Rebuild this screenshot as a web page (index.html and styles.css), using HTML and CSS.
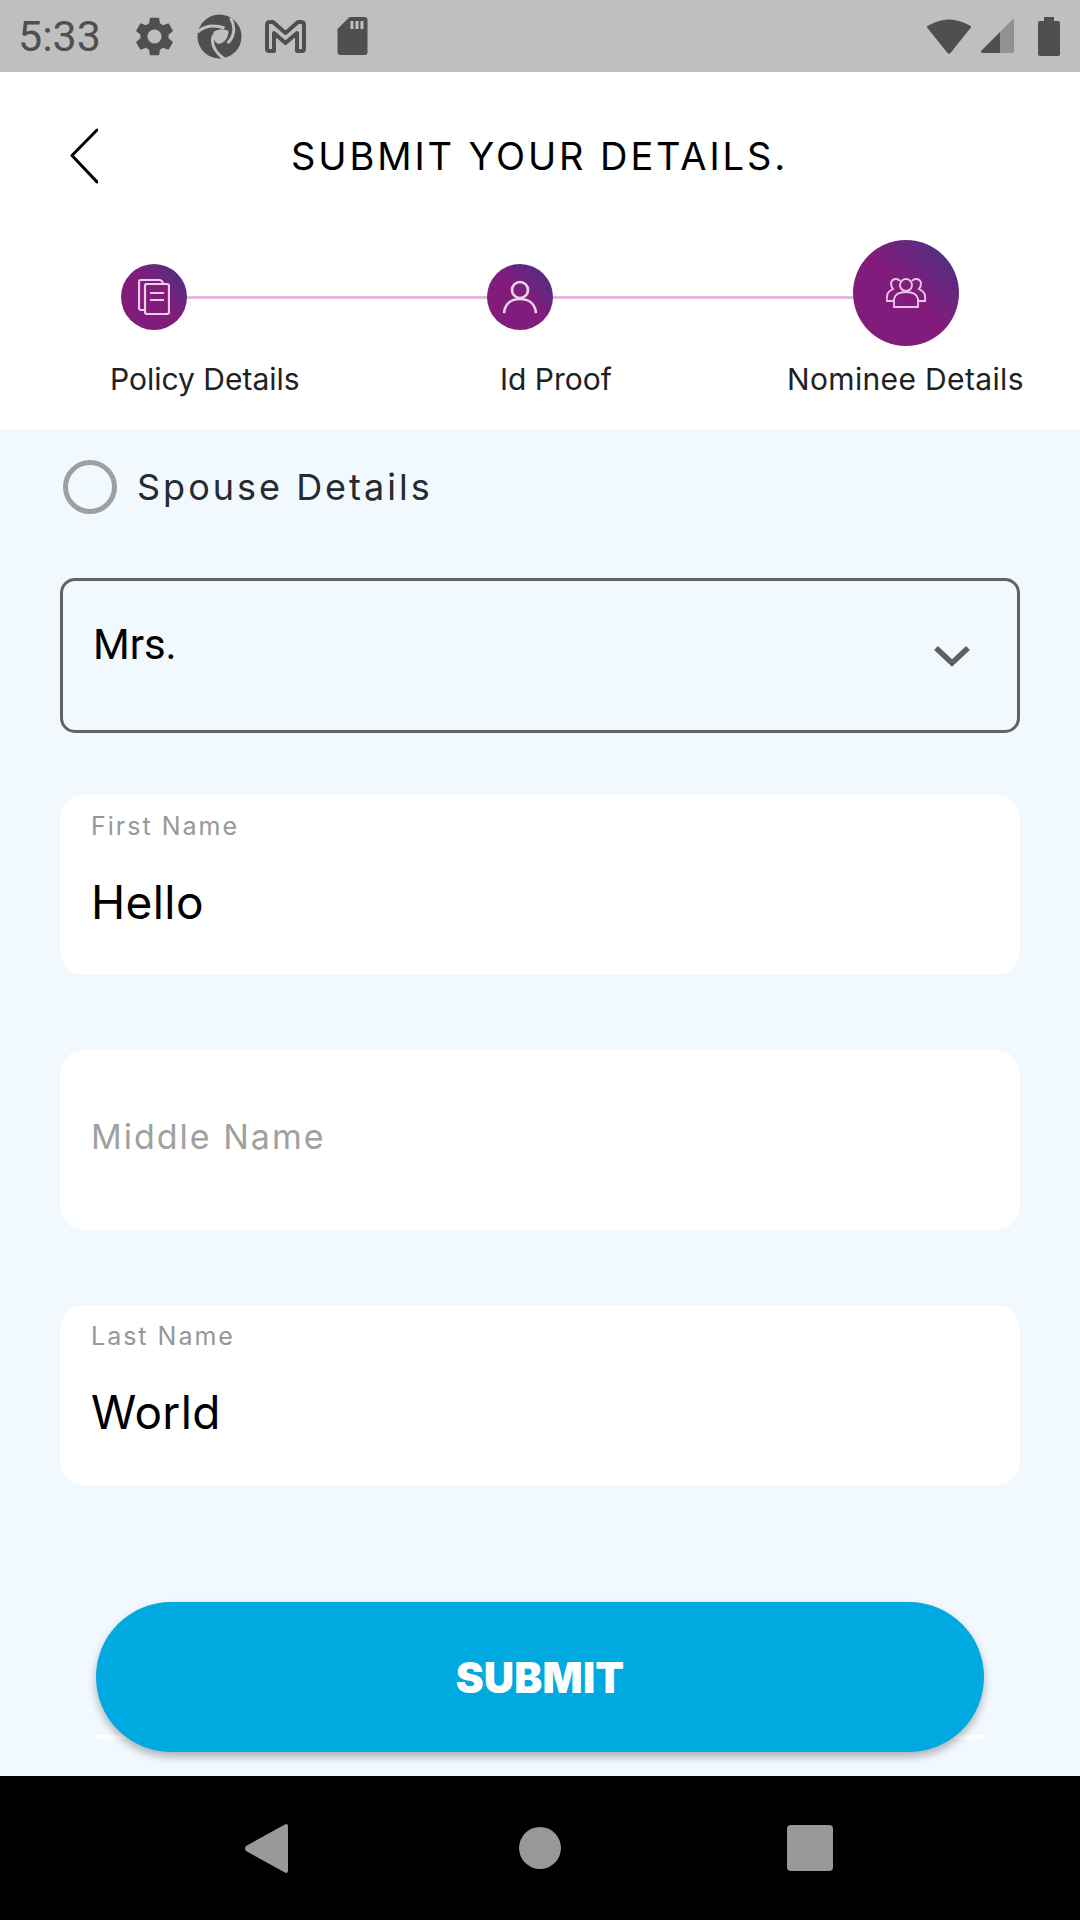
FILE: index.html
```html
<!DOCTYPE html>
<html lang="en">
<head>
<meta charset="utf-8">
<title>Submit your details</title>
<link rel="stylesheet" href="styles.css">
</head>
<body>
<div class="screen">
  <div class="status">
    <span class="time">5:33</span>
    <svg class="ic-gear" viewBox="0 0 24 24"><path fill="#4f4f4f" d="M19.14 12.94c.04-.3.06-.61.06-.94s-.02-.64-.07-.94l2.03-1.58a.5.5 0 0 0 .12-.61l-1.92-3.32a.5.5 0 0 0-.59-.22l-2.39.96a7 7 0 0 0-1.62-.94l-.36-2.54a.48.48 0 0 0-.48-.41h-3.84a.48.48 0 0 0-.47.41l-.36 2.54c-.59.24-1.13.57-1.62.94l-2.39-.96a.49.49 0 0 0-.59.22L2.74 8.87a.48.48 0 0 0 .12.61l2.03 1.58c-.05.3-.09.63-.09.94s.02.64.07.94l-2.03 1.58a.5.5 0 0 0-.12.61l1.92 3.32c.12.22.37.29.59.22l2.39-.96c.5.38 1.03.7 1.62.94l.36 2.54c.05.24.24.41.48.41h3.84c.24 0 .44-.17.47-.41l.36-2.54c.59-.24 1.13-.56 1.62-.94l2.39.96c.22.08.47 0 .59-.22l1.92-3.32a.48.48 0 0 0-.12-.61l-2.01-1.58zM12 15.6A3.6 3.6 0 1 1 12 8.4a3.6 3.6 0 0 1 0 7.2z"/></svg>
    <svg class="ic-logo" viewBox="0 0 44 45"><circle cx="22" cy="22.5" r="22" fill="#4f4f4f"/><path fill="none" stroke="#bfbfbf" stroke-width="3" d="M0 18 C8 11 18 11 27 14 M33 4 C39 14 36 24 30 29 M16 21 C13 30 17 38 27 45"/><path fill="#bfbfbf" d="M16 18 C22 14 27 15 31 17 C31 24 27 29 21 30 C17 28 15 24 16 18z"/></svg>
    <svg class="ic-gmail" viewBox="0 0 41 33"><path fill="none" stroke="#4f4f4f" stroke-width="4" stroke-linejoin="round" d="M2 5 Q2 2 5 2 H8 L20.5 13 L33 2 H36 Q39 2 39 5 V29 Q39 31 37 31 H32 V13 L20.5 23 L9 13 V31 H4 Q2 31 2 29z"/></svg>
    <svg class="ic-sd" viewBox="0 0 30 38"><path fill="#4f4f4f" d="M12 0 H27 Q30 0 30 3 V35 Q30 38 27 38 H3 Q0 38 0 35 V12z"/><path fill="#bfbfbf" d="M13 4h3v8h-3zM18 4h3v8h-3zM23 4h3v8h-3z"/></svg>
    <span class="status-gap"></span>
    <svg class="ic-wifi" viewBox="0 0 45 36"><path fill="#4f4f4f" d="M1 8 Q22.500 -5 44 8 Q45 9 44 10 L24 35 Q22.500 36.500 21 35 L1 10 Q0 9 1 8z"/></svg>
    <svg class="ic-signal" viewBox="0 0 33 34"><path fill="#919191" d="M32 0 Q33 0 33 1 V33 Q33 34 32 34 H19 V13z"/><path fill="#4f4f4f" d="M19 13 V34 H1 Q-1 33 1 31z"/></svg>
    <svg class="ic-battery" viewBox="0 0 22 39"><path fill="#4f4f4f" d="M6 0 H16 V4 H20 Q22 4 22 6 V37 Q22 39 20 39 H2 Q0 39 0 37 V6 Q0 4 2 4 H6z"/></svg>
  </div>

  <header class="head">
    <div class="titlebar">
      <svg class="back" viewBox="0 0 28 56"><path fill="none" stroke="#000" stroke-width="3" stroke-linecap="round" stroke-linejoin="round" d="M27 2 L2 27.500 L27 54"/></svg>
      <h1 class="title">SUBMIT YOUR DETAILS.</h1>
    </div>
    <div class="track">
      <span class="dot">
        <svg class="ic-doc" viewBox="0 0 32 36"><g fill="none" stroke="#e9cfe6" stroke-width="2.200"><path d="M6 31 H3 Q1 31 1 29 V3 Q1 1 3 1 H21 Q24 1 25 4"/><path fill="#821c7c" d="M8 5 H29 Q31 5 31 7 V33 Q31 35 29 35 H9 Q7 35 7 33 V6z"/><path d="M12 14 H26 M12 21 H26"/></g></svg>
      </span>
      <span class="line"></span>
      <span class="dot">
        <svg class="ic-user" viewBox="0 0 34 34"><g fill="none" stroke="#ecd5ea" stroke-width="2.600"><circle cx="17" cy="10" r="8"/><path d="M1 33 C2 23 9 19 17 19 C25 19 32 23 33 33"/></g></svg>
      </span>
      <span class="line"></span>
      <span class="dot dot-big">
        <svg class="ic-group" viewBox="0 0 40 30"><g fill="none" stroke="#e6c6e3" stroke-width="1.900"><path d="M14 3 C12 0 6 0 5 5 C5 8 6 10 7 11 C3 13 0 15 0.900 23 H9"/><path d="M26 3 C28 0 34 0 35 5 C35 8 34 10 33 11 C37 13 40 15 39.100 23 H31"/><circle cx="20" cy="7" r="6"/><path d="M8 29 H32 V21 C31 16 26 14 20 14 C14 14 9 16 8 21z"/></g></svg>
      </span>
    </div>
    <div class="labels">
      <span class="label l1">Policy Details</span>
      <span class="label l2">Id Proof</span>
      <span class="label l3">Nominee Details</span>
    </div>
  </header>

  <main class="form">
    <label class="radio"><span class="ring"></span><span class="radio-text">Spouse Details</span></label>
    <div class="select">
      <span class="select-val">Mrs.</span>
      <svg class="chev" viewBox="0 0 36 22"><path fill="none" stroke="#5f5f5f" stroke-width="5.500" d="M2 3 L18 18 L34 3"/></svg>
    </div>
    <div class="field"><span class="f-label">First Name</span><span class="f-val">Hello</span></div>
    <div class="field field-empty"><span class="f-ph">Middle Name</span></div>
    <div class="field"><span class="f-label">Last Name</span><span class="f-val">World</span></div>
    <div class="btn-wrap"><button class="btn">SUBMIT</button></div>
  </main>

  <nav class="nav">
    <svg class="n-back" viewBox="0 0 43 49"><path fill="#999" d="M41 0 Q43 0 43 2 V47 Q43 49 41 49 L39 48 L1 27 Q-1 24.500 1 22 L39 1z"/></svg>
    <span class="n-home"></span>
    <span class="n-square"></span>
  </nav>
</div>
</body>
</html>
```
FILE: styles.css
```css
* { box-sizing: border-box; }
html, body { margin: 0; padding: 0; }
body { font-family: "Inter", "Liberation Sans", sans-serif; }
.screen { width: 1080px; height: 1920px; display: flex; flex-direction: column; background: #f1f8fe; overflow: hidden; }

.status { height: 72px; flex: none; background: #bfbfbf; display: flex; align-items: center; padding: 0 20px 0 18px; }
.time { font-family: "Roboto", sans-serif; font-size: 43px; color: #4f4f4f; width: 113px; flex: none; }
.status svg { display: block; flex: none; }
.ic-gear { width: 47px; height: 47px; margin-right: 19px; }
.ic-logo { width: 45px; height: 45px; margin-right: 22px; }
.ic-gmail { width: 43px; height: 33px; margin-right: 30px; }
.ic-sd { width: 31px; height: 38px; }
.status-gap { flex: 1; }
.ic-wifi { width: 46px; height: 36px; margin-right: 8px; }
.ic-signal { width: 35px; height: 34px; margin-right: 23px; }
.ic-battery { width: 22px; height: 39px; }

.head { height: 357px; flex: none; background: #fff; display: flex; flex-direction: column; }
.titlebar { height: 167px; flex: none; display: flex; align-items: flex-start; padding: 56px 0 0 70px; }
.back { width: 28px; height: 56px; flex: none; }
.title { margin: 5px 0 0 193px; font-size: 38px; font-weight: 400; letter-spacing: 2.900px; color: #000; line-height: 46px; white-space: nowrap; }

.track { display: flex; align-items: center; height: 116px; flex: none; padding-left: 121px; padding-right: 121px; }
.dot { width: 66px; height: 66px; flex: none; border-radius: 50%; display: flex; align-items: center; justify-content: center; background: linear-gradient(225deg, #4e3081 8%, #821c7c 48%); }
.dot-big { width: 106px; height: 106px; margin-bottom: 9px; }
.line { flex: 1; height: 3px; background: #e0b8e0; }
.ic-doc { width: 32px; height: 36px; }
.ic-user { width: 34px; height: 34px; }
.ic-group { width: 40px; height: 30px; }

.labels { display: flex; margin-top: 6px; padding-left: 110px; }
.label { font-size: 30px; letter-spacing: 0; color: #212121; line-height: 36px; white-space: nowrap; }
.l1 { width: 390px; }
.l2 { width: 287px; }
.l3 { letter-spacing: .35px; }

.form { flex: 1; padding: 31px 60px 0; display: flex; flex-direction: column; }
.radio { display: flex; align-items: center; margin-left: 3px; }
.ring { width: 54px; height: 54px; border: 5px solid #9aa0a3; border-radius: 50%; margin-right: 20px; flex: none; }
.radio-text { font-size: 36px; letter-spacing: 3px; color: #272a2e; line-height: 44px; }

.select { margin-top: 64px; height: 155px; border: 3px solid #636363; border-radius: 15px; display: flex; justify-content: space-between; padding: 36px 47px 0 30px; }
.select-val { font-family: "Roboto", sans-serif; font-size: 42px; line-height: 56px; color: #000; }
.chev { width: 36px; height: 22px; margin-top: 28px; }

.field { margin-top: 75px; height: 180px; background: #fff; border-radius: 24px; padding: 15px 31px 0; display: flex; flex-direction: column; }
.select + .field { margin-top: 62px; }
.f-label { font-size: 25px; letter-spacing: 2px; color: #979797; line-height: 32px; }
.f-val { margin-top: 32px; font-size: 46px; line-height: 56px; letter-spacing: .4px; color: #000; }
.field-empty { padding-top: 66px; }
.f-ph { font-size: 34px; letter-spacing: 2px; color: #a0a0a0; line-height: 42px; }

.btn-wrap { position: relative; margin: 117px 36px 0; }
.btn-wrap::before { content: ""; position: absolute; left: 0; right: 0; top: 133px; height: 4px; background: #fff; }
.btn { position: relative; display: block; width: 100%; height: 150px; border: 0; border-radius: 75px; background: #00a9e0; color: #fff; font-family: "Inter", sans-serif; font-weight: 900; font-size: 42px; letter-spacing: .2px; box-shadow: 0 5px 8px rgba(0,0,0,.28); }

.nav { height: 144px; flex: none; background: #000; display: flex; align-items: center; }
.nav > * { display: block; flex: none; }
.n-back { width: 43px; height: 49px; margin-left: 245px; margin-top: 1px; }
.n-home { width: 42px; height: 42px; border-radius: 50%; background: #999; margin-left: 231px; }
.n-square { width: 46px; height: 46px; border-radius: 4px; background: #999; margin-left: 226px; }
```
